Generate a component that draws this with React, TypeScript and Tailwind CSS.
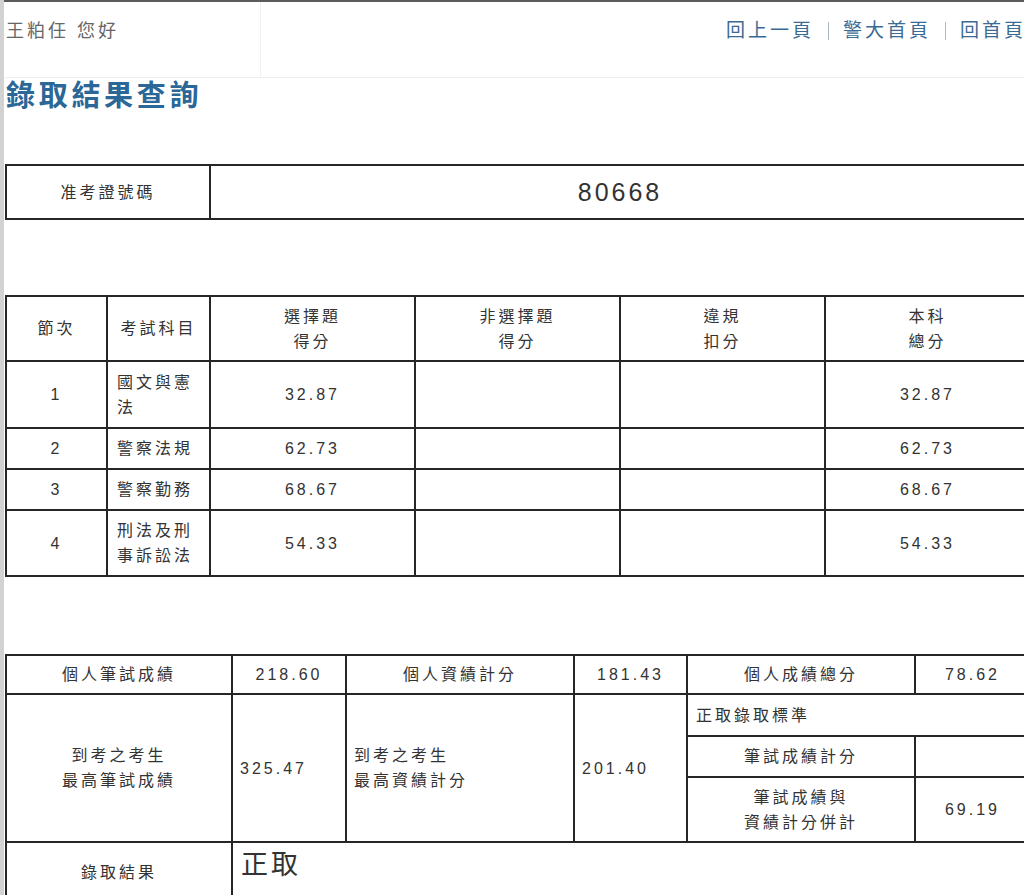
const cell = "border-2 border-[#262626] text-[16px] tracking-[3px] text-[#333] leading-[25px] align-middle";

const Scores = [
  { no: "1", subject: "國文與憲法", mc: "32.87", total: "32.87", h: "h-[67px]" },
  { no: "2", subject: "警察法規", mc: "62.73", total: "62.73", h: "h-[41px]" },
  { no: "3", subject: "警察勤務", mc: "68.67", total: "68.67", h: "h-[41px]" },
  { no: "4", subject: "刑法及刑事訴訟法", mc: "54.33", total: "54.33", h: "h-[66px]" },
];

const App = () => {
  return (
    <div className="flex w-[1024px] h-[895px] overflow-hidden bg-white font-['Liberation_Sans','Noto_Sans_CJK_TC',sans-serif]">
      <div className="w-[4px] shrink-0 bg-[#d2d2d2]" />
      <div className="w-[1040px] shrink-0 pl-[1px]">
        <div className="h-[2px] bg-[#5c5c5c] -ml-[1px]" />
        {/* header */}
        <div className="flex h-[76px] border-b border-[#efefef]">
          <div className="w-[256px] border-r border-[#f1f1f1] pt-[17px] pl-[1px] text-[18px] leading-[24px] tracking-[3px] text-[#666]">
            王粕任 您好
          </div>
          <div className="flex-1 flex justify-end items-start pr-[18px] pt-[17px] text-[19px] leading-[24px] tracking-[3px] text-[#3b6b95]">
            <span>回上一頁</span>
            <span className="mx-[14px] mt-[3px] w-px h-[18px] bg-[#a9b8c6]" />
            <span>警大首頁</span>
            <span className="mx-[14px] mt-[3px] w-px h-[18px] bg-[#a9b8c6]" />
            <span>回首頁</span>
          </div>
        </div>
        <h1 className="h-[36px] leading-[36px] pl-[1px] text-[29px] font-bold tracking-[3.7px] text-[#2b6797]">
          錄取結果查詢
        </h1>

        {/* 准考證 */}
        <table className="mt-[50px] w-[1024px] table-fixed border-collapse">
          <colgroup>
            <col className="w-[204px]" />
            <col className="w-[820px]" />
          </colgroup>
          <tbody>
            <tr className="h-[54px]">
              <td className={`${cell} text-center`}>准考證號碼</td>
              <td className={`${cell} text-center text-[25px] tracking-[3.5px]`}>80668</td>
            </tr>
          </tbody>
        </table>

        {/* 科目成績 */}
        <table className="mt-[75px] w-[1024px] table-fixed border-collapse">
          <colgroup>
            <col className="w-[101px]" />
            <col className="w-[103px]" />
            <col className="w-[205px]" />
            <col className="w-[205px]" />
            <col className="w-[205px]" />
            <col className="w-[205px]" />
          </colgroup>
          <tbody>
            <tr className="h-[65px]">
              <td className={`${cell} text-center`}>節次</td>
              <td className={`${cell} text-center`}>考試科目</td>
              <td className={`${cell} text-center`}>選擇題<br />得分</td>
              <td className={`${cell} text-center`}>非選擇題<br />得分</td>
              <td className={`${cell} text-center`}>違規<br />扣分</td>
              <td className={`${cell} text-center`}>本科<br />總分</td>
            </tr>
            {Scores.map((s) => (
              <tr key={s.no} className={s.h}>
                <td className={`${cell} text-center`}>{s.no}</td>
                <td className={`${cell} px-[9px] break-all`}>{s.subject}</td>
                <td className={`${cell} text-center`}>{s.mc}</td>
                <td className={cell}></td>
                <td className={cell}></td>
                <td className={`${cell} text-center`}>{s.total}</td>
              </tr>
            ))}
          </tbody>
        </table>

        {/* 總成績 */}
        <table className="mt-[77px] w-[1024px] table-fixed border-collapse">
          <colgroup>
            <col className="w-[226px]" />
            <col className="w-[114px]" />
            <col className="w-[228px]" />
            <col className="w-[113px]" />
            <col className="w-[228px]" />
            <col className="w-[115px]" />
          </colgroup>
          <tbody>
            <tr className="h-[39px]">
              <td className={`${cell} text-center`}>個人筆試成績</td>
              <td className={`${cell} text-center`}>218.60</td>
              <td className={`${cell} text-center`}>個人資績計分</td>
              <td className={`${cell} text-center`}>181.43</td>
              <td className={`${cell} text-center`}>個人成績總分</td>
              <td className={`${cell} text-center`}>78.62</td>
            </tr>
            <tr className="h-[42px]">
              <td rowSpan={3} className={`${cell} text-center`}>到考之考生<br />最高筆試成績</td>
              <td rowSpan={3} className={`${cell} px-[7px]`}>325.47</td>
              <td rowSpan={3} className={`${cell} px-[7px]`}>到考之考生<br />最高資績計分</td>
              <td rowSpan={3} className={`${cell} px-[7px]`}>201.40</td>
              <td colSpan={2} className={`${cell} px-[8px]`}>正取錄取標準</td>
            </tr>
            <tr className="h-[41px]">
              <td className={`${cell} text-center`}>筆試成績計分</td>
              <td className={cell}></td>
            </tr>
            <tr className="h-[65px]">
              <td className={`${cell} text-center`}>筆試成績與<br />資績計分併計</td>
              <td className={`${cell} text-center`}>69.19</td>
            </tr>
            <tr className="h-[60px]">
              <td className={`${cell} text-center`}>錄取結果</td>
              <td colSpan={5} className={`${cell} px-[8px] text-[27px] tracking-[2px] align-top pt-[10px]`}>正取</td>
            </tr>
          </tbody>
        </table>
      </div>
    </div>
  );
};

export default App;
